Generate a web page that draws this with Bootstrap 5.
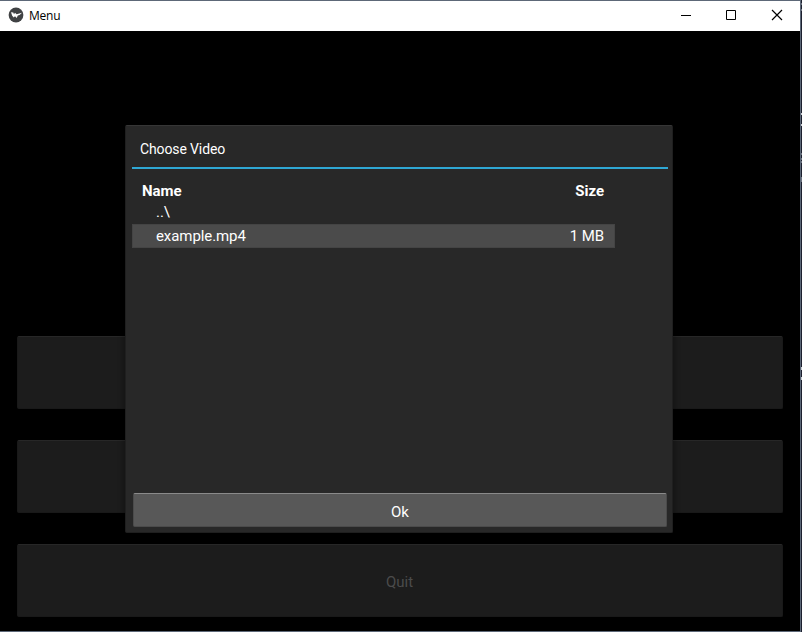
<!DOCTYPE html>
<html lang="en">
<head>
<meta charset="utf-8">
<title>Menu</title>
<link href="https://cdn.jsdelivr.net/npm/bootstrap@5.3.0/dist/css/bootstrap.min.css" rel="stylesheet">
<style>
body{margin:0;background:#1d2130;overflow:hidden;font-family:Roboto,sans-serif;font-size:15px}
.desktop{width:802px;height:632px}
.win{width:801px;border:1px solid #5d6878;border-left:0;background:#000}
.titlebar{height:30px;background:#fff;color:#000;padding-left:8px;font:12px "Open Sans","Noto Sans",sans-serif}
.titlebar .caption-text{margin-left:5px;padding-bottom:2px;letter-spacing:-.25px}
.titlebar .logo{margin-bottom:2px}
.ctl{width:46px;height:30px}
.menu-area{padding:0 17px 14px;gap:31px}
.menu-btn{height:73px;background:#1c1c1c;border:1px solid #191919;border-top-color:#272727;border-radius:2px;color:#4b4b4b;font-size:15px;padding:3px 1px 0 0}
.popup{left:125px;top:94px;width:548px;height:408px;background:#282828;border:1px solid #1f1f1f;border-top-color:#363636;border-radius:2px;padding:0 4px 5px 6px;color:#fff;box-shadow:0 0 7px rgba(0,0,0,.45)}
.popup-title{height:43px;padding:12px 8px 0;font-size:14px;letter-spacing:-.12px;line-height:22px;border-bottom:2px solid #2fa7d4}
.files{width:483px;padding-top:10px}
.file-row{height:24px;line-height:24px;padding:0 11px 0 24px;letter-spacing:-.08px}
.head-row{padding-left:10px;height:22px;letter-spacing:0}
.parent-row{height:23px;line-height:22px}
.file-row.selected{background:#4b4b4b;box-shadow:inset 0 0 0 1px #444}
.ok-btn{height:34px;margin:0 1px;background:#585858;border:1px solid #4b4b4b;border-top-color:#8a8a8a;border-radius:2px;color:#fff;font-size:15px;line-height:22px;padding:4px 0 0}
.edge{width:1px}
.spark{height:2px;background:#c8cbd0}
.spark.dim{background:#6d7380}
</style>
</head>
<body>
<div class="desktop d-flex">
 <main class="win d-flex flex-column">
  <header class="titlebar d-flex align-items-center">
   <svg class="logo" width="16" height="16" viewBox="0 0 16 16"><circle cx="8" cy="8" r="7.4" fill="#404244"/><path d="M3 5.300 5.300 5.600 6 7.200 7 5.700 8.600 7.200 14 5.700 11.600 8 9.800 8.500 8.700 11 7 9.300 5.700 10.500 4.200 8.800z" fill="#fff"/></svg>
   <span class="caption-text">Menu</span>
   <div class="d-flex ms-auto">
    <svg class="ctl" viewBox="0 0 46 30"><path d="M19 14.500h10" stroke="#000"/></svg>
    <svg class="ctl" viewBox="0 0 46 30"><path d="M18.500 9.500h9v9h-9z" fill="none" stroke="#000"/></svg>
    <svg class="ctl" viewBox="0 0 46 30"><path d="m18 9 10 10m0-10L18 19" stroke="#000" stroke-width="1.200"/></svg>
   </div>
  </header>
  <section class="position-relative flex-fill">
   <div class="menu-area d-flex flex-column justify-content-end h-100">
    <button class="menu-btn btn" aria-label="Menu item 1"></button>
    <button class="menu-btn btn" aria-label="Menu item 2"></button>
    <button class="menu-btn btn">Quit</button>
   </div>
   <div class="popup position-absolute d-flex flex-column" role="dialog">
    <div class="popup-title">Choose Video</div>
    <div class="files flex-fill">
     <div class="file-row head-row d-flex justify-content-between fw-bold"><span>Name</span><span>Size</span></div>
     <div class="file-row parent-row">..\</div>
     <div class="file-row selected d-flex justify-content-between"><span>example.mp4</span><span>1 MB</span></div>
    </div>
    <button class="ok-btn btn">Ok</button>
   </div>
  </section>
 </main>
 <aside class="edge d-flex flex-column">
  <div class="spark dim" style="margin-top:3px"></div>
  <div class="spark dim" style="margin-top:4px"></div>
  <div class="spark" style="margin-top:102px"></div>
  <div class="spark" style="margin-top:9px"></div>
  <div class="spark dim" style="margin-top:27px"></div>
  <div class="spark dim" style="margin-top:3px"></div>
  <div class="spark dim" style="margin-top:1px"></div>
  <div class="spark dim" style="margin-top:14px;height:5px"></div>
  <div class="spark" style="margin-top:185px;height:3px"></div>
  <div class="spark" style="margin-top:7px;height:3px"></div>
 </aside>
</div>
<script src="https://cdn.jsdelivr.net/npm/bootstrap@5.3.0/dist/js/bootstrap.bundle.min.js"></script>
</body>
</html>
